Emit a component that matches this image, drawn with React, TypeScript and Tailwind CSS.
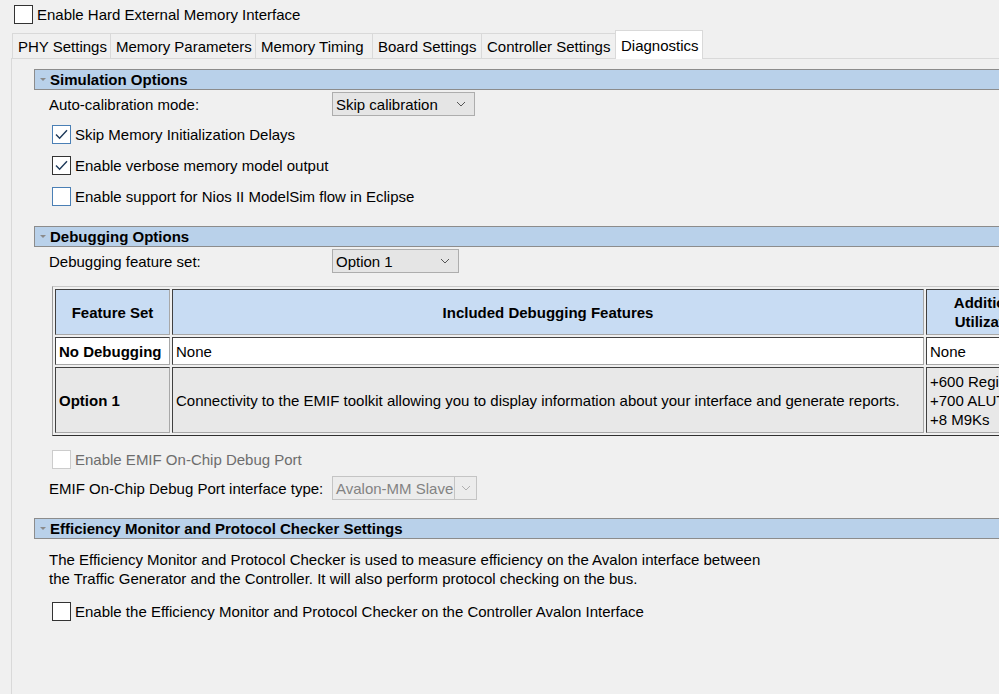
import React from "react"

function Box({ checked, tone = "dark", disabled }: { checked?: boolean; tone?: "dark" | "blue"; disabled?: boolean }) {
  const border = disabled ? "border-[#cccccc]" : tone === "blue" ? "border-[#4a7fb5]" : "border-[#333333]"
  return (
    <span className={`flex h-[19px] w-[19px] shrink-0 items-center justify-center border bg-white ${border}`}>
      {checked && (
        <svg width="13" height="11" viewBox="0 0 13 11">
          <path d="M1 5.5 L4.6 9.2 L12 1.2" fill="none" stroke="#1e3a5a" strokeWidth="1.4" />
        </svg>
      )}
    </span>
  )
}

function Check({ label, checked, tone, disabled, className = "" }: { label: string; checked?: boolean; tone?: "dark" | "blue"; disabled?: boolean; className?: string }) {
  return (
    <div className={`flex h-[19px] items-center gap-[4px] pl-[18px] ${className}`}>
      <Box checked={checked} tone={tone} disabled={disabled} />
      <span className={disabled ? "text-[#6d6d6d]" : ""}>{label}</span>
    </div>
  )
}

function Chevron({ color = "#555" }: { color?: string }) {
  return (
    <svg width="10" height="6" viewBox="0 0 10 6">
      <path d="M1 1 L5 5 L9 1" fill="none" stroke={color} strokeWidth="1" />
    </svg>
  )
}

function Select({ value, width, disabled }: { value: string; width: string; disabled?: boolean }) {
  return (
    <div className={`flex h-[24px] items-center justify-between border ${width} ${disabled ? "border-[#c4c4c4] bg-[#ececec] text-[#838383]" : "border-[#adadad] bg-[#e5e5e5]"}`}>
      <span className="pl-[3px]">{value}</span>
      {disabled ? (
        <span className="flex h-full w-[22px] items-center justify-center border-l border-[#c4c4c4]">
          <Chevron color="#b0b0b0" />
        </span>
      ) : (
        <span className="pr-[8px]">
          <Chevron />
        </span>
      )}
    </div>
  )
}

function SectionBar({ title }: { title: string }) {
  return (
    <div className="-mr-[4px] flex h-[21px] items-center border-y border-l border-[#8c8c8c] bg-[#b9d1ea]">
      <svg width="14" height="8" viewBox="0 0 14 8" className="ml-[1px]">
        <path d="M4 2 L10 2 L7 5 Z" fill="#8a8a8a" />
      </svg>
      <span className="font-bold">{title}</span>
    </div>
  )
}

function Row({ label, children, className = "" }: { label: string; children: React.ReactNode; className?: string }) {
  return (
    <div className={`flex items-center pl-[15px] ${className}`}>
      <span className="w-[283px] shrink-0">{label}</span>
      {children}
    </div>
  )
}

export default function App() {
  const tabs = [
    { name: "PHY Settings", w: "w-[98px]" },
    { name: "Memory Parameters", w: "w-[145px]" },
    { name: "Memory Timing", w: "w-[117px]" },
    { name: "Board Settings", w: "w-[109px]" },
    { name: "Controller Settings", w: "w-[134px]" },
  ]

  const cell = "border border-t-[#404040] border-l-[#404040] border-b-[#a8a8a8] border-r-[#a8a8a8] px-[3px]"

  return (
    <div className="h-[694px] w-[999px] overflow-hidden bg-[#f0f0f0] font-['Liberation_Sans',sans-serif] text-[15px] leading-[19px] text-black">
      <div className="flex items-center gap-[4px] pl-[14px] pt-[5px]">
        <Box />
        <span>Enable Hard External Memory Interface</span>
      </div>

      <div className="ml-[12px] mt-[6px] flex h-[28px] items-end">
        {tabs.map((t) => (
          <div key={t.name} className={`flex h-[25px] items-center border border-r-0 border-b-0 border-[#d9d9d9] pl-[5px] ${t.w}`}>
            {t.name}
          </div>
        ))}
        <div className="relative z-10 -mb-[1px] flex h-[29px] w-[88px] items-center border border-b-0 border-[#d9d9d9] bg-white pl-[5px]">
          Diagnostics
        </div>
      </div>

      <div className="ml-[11px] h-[640px] border-l border-t border-[#d9d9d9] pl-[22px] pt-[10px]">
        <SectionBar title="Simulation Options" />
        <Row label="Auto-calibration mode:" className="mt-[2px]">
          <Select value="Skip calibration" width="w-[143px]" />
        </Row>
        <Check label="Skip Memory Initialization Delays" checked tone="blue" className="mt-[9px]" />
        <Check label="Enable verbose memory model output" checked className="mt-[12px]" />
        <Check label="Enable support for Nios II ModelSim flow in Eclipse" tone="blue" className="mt-[12px]" />

        <div className="mt-[20px]">
          <SectionBar title="Debugging Options" />
        </div>
        <Row label="Debugging feature set:" className="mt-[2px]">
          <Select value="Option 1" width="w-[127px]" />
        </Row>

        <div className="mt-[13px] pl-[18px]">
          <table className="w-[1000px] table-fixed border-separate border-spacing-[2px] border border-t-[#c8c8c8] border-l-[#9a9a9a] border-b-[#303030] border-r-[#303030] text-[15px] leading-[19px]">
            <colgroup>
              <col className="w-[115px]" />
              <col className="w-[752px]" />
              <col className="w-[129px]" />
            </colgroup>
            <tbody>
              <tr className="h-[46px] bg-[#c8dcf3] font-bold">
                <td className={`${cell} text-center`}>Feature Set</td>
                <td className={`${cell} text-center`}>Included Debugging Features</td>
                <td className={`${cell} text-center`}>Additional Utilization</td>
              </tr>
              <tr className="h-[28px] bg-white">
                <td className={`${cell} font-bold`}>No Debugging</td>
                <td className={cell}>None</td>
                <td className={cell}>None</td>
              </tr>
              <tr className="h-[66px] bg-[#e8e8e8]">
                <td className={`${cell} font-bold`}>Option 1</td>
                <td className={cell}>Connectivity to the EMIF toolkit allowing you to display information about your interface and generate reports.</td>
                <td className={`${cell} whitespace-nowrap`}>
                  +600 Registers
                  <br />
                  +700 ALUTs
                  <br />
                  +8 M9Ks
                </td>
              </tr>
            </tbody>
          </table>
        </div>

        <Check label="Enable EMIF On-Chip Debug Port" disabled className="mt-[14px]" />
        <Row label="EMIF On-Chip Debug Port interface type:" className="mt-[7px]">
          <Select value="Avalon-MM Slave" width="w-[145px]" disabled />
        </Row>

        <div className="mt-[18px]">
          <SectionBar title="Efficiency Monitor and Protocol Checker Settings" />
        </div>
        <p className="mt-[11px] pl-[15px]">
          The Efficiency Monitor and Protocol Checker is used to measure efficiency on the Avalon interface between
          <br />
          the Traffic Generator and the Controller. It will also perform protocol checking on the bus.
        </p>
        <Check label="Enable the Efficiency Monitor and Protocol Checker on the Controller Avalon Interface" className="mt-[14px]" />
      </div>
    </div>
  )
}
